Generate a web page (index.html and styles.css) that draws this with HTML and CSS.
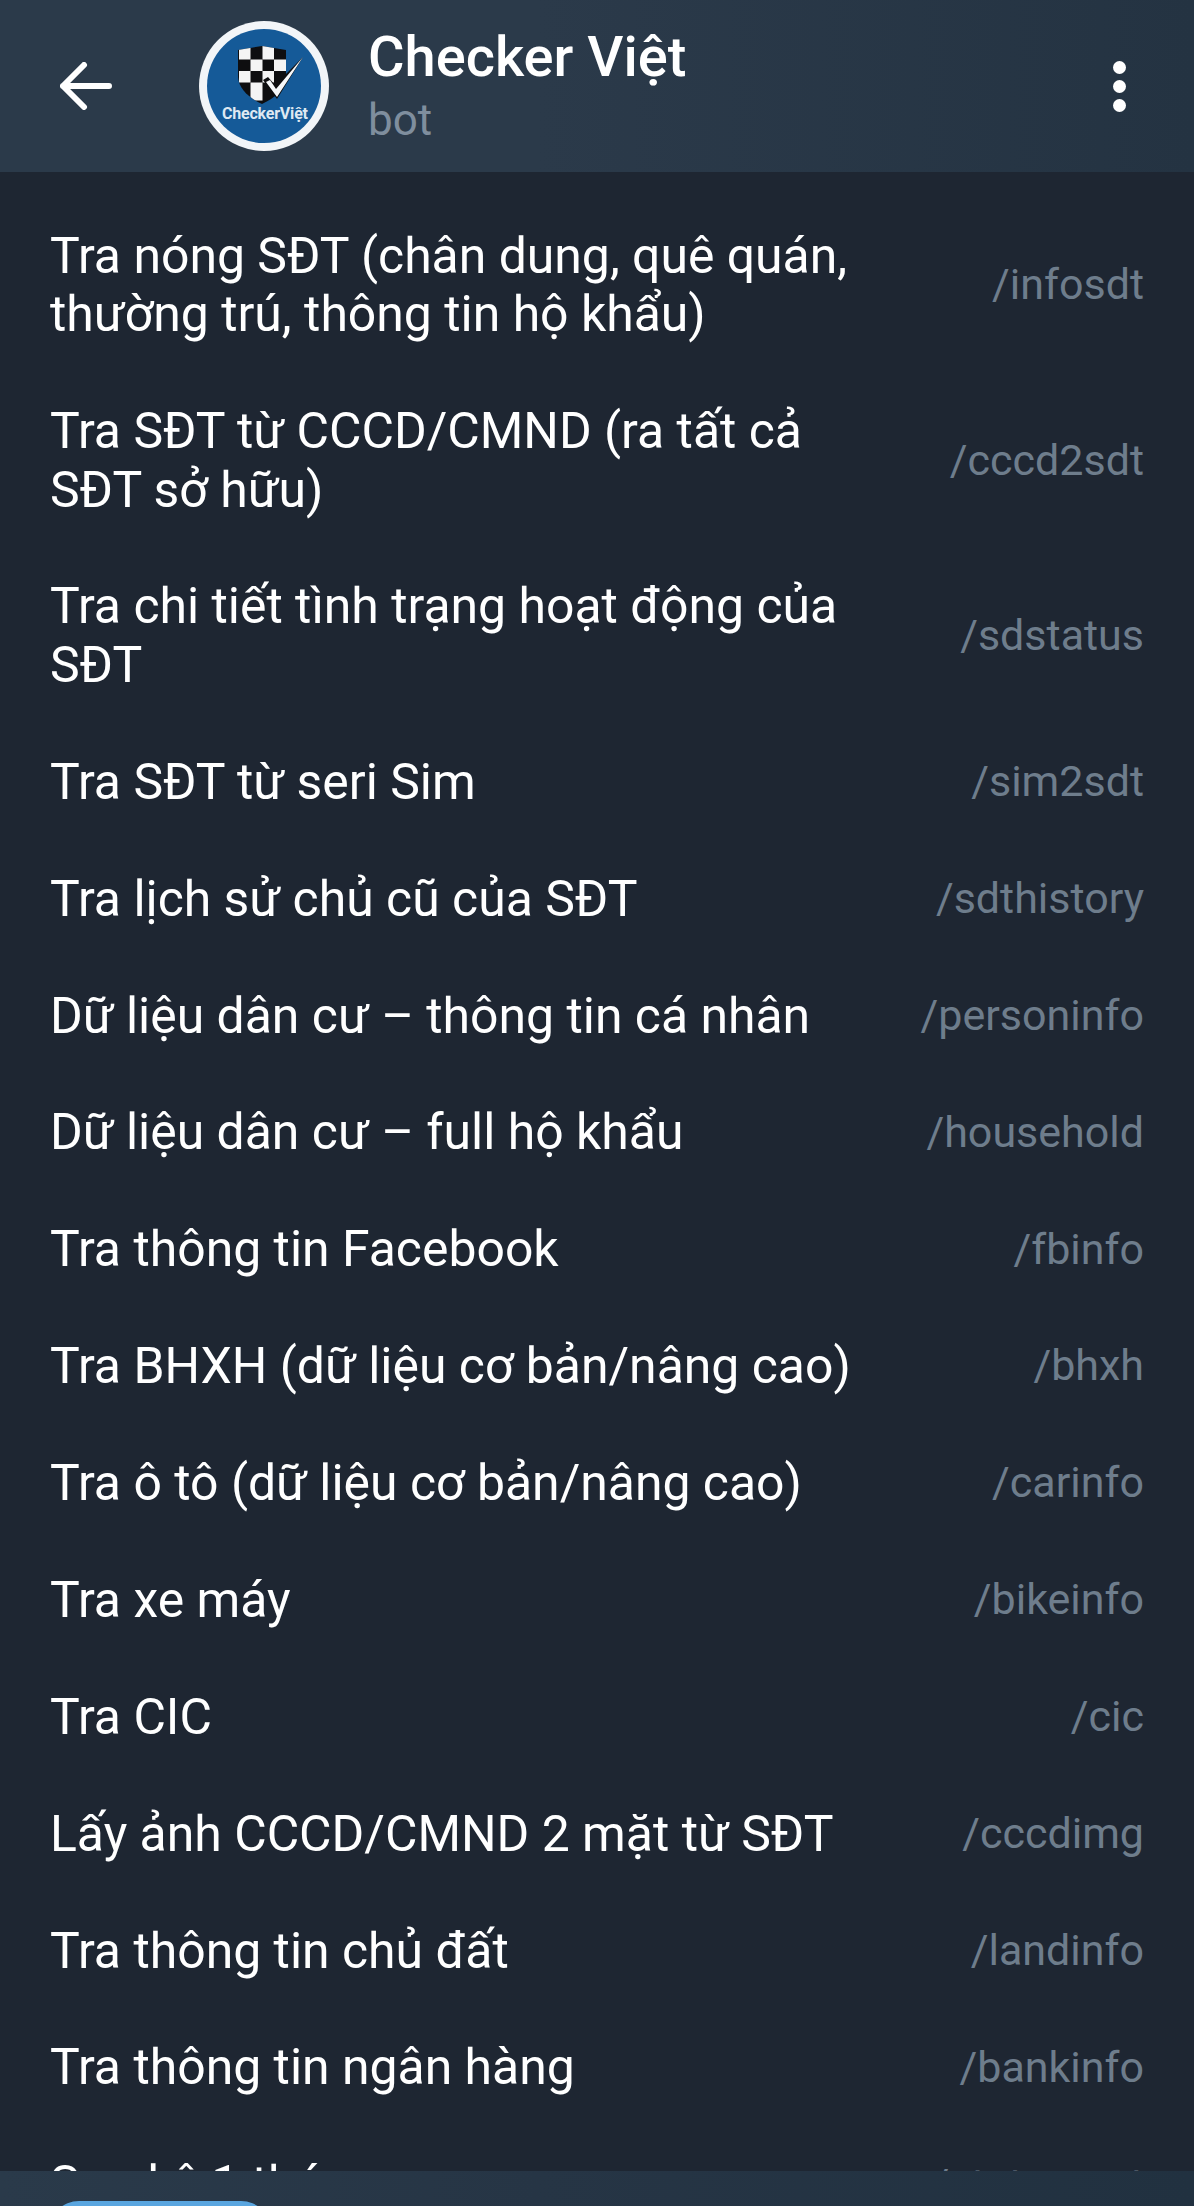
FILE: index.html
```html
<!DOCTYPE html>
<html lang="en">

<head>
    <meta charset="UTF-8">
    <meta name="viewport" content="width=device-width, initial-scale=1.0">
    <title>Checker Việt</title>
    <link rel="stylesheet" href="styles.css">
</head>

<body>
    <header class="topbar">
        <svg class="back-icon" viewBox="0 0 52 48" aria-hidden="true">
            <path d="M3 24H49M24 3L3 24L24 45" />
        </svg>
        <svg class="avatar" viewBox="0 0 130 130" aria-hidden="true">
            <defs>
                <clipPath id="shieldClip">
                    <path d="M39 29L63 25L87 29V56C86 68 76 77 63 83C50 77 40 68 39 56Z" />
                </clipPath>
            </defs>
            <circle cx="65" cy="65" r="65" fill="#f2f5f8" />
            <circle cx="65" cy="65" r="57" fill="#155a98" />
            <path d="M39 29L63 25L87 29V56C86 68 76 77 63 83C50 77 40 68 39 56Z" fill="#0e0e10" />
            <g fill="#f4f4f4" clip-path="url(#shieldClip)">
                <rect x="40" y="27" width="11.5" height="11.5" />
                <rect x="63.5" y="25" width="11.5" height="13.5" />
                <rect x="51.5" y="38.5" width="12" height="11.5" />
                <rect x="75" y="38.5" width="12" height="11.5" />
                <rect x="40" y="50" width="11.5" height="11.5" />
                <rect x="63.5" y="50" width="11.5" height="11.5" />
                <rect x="51.5" y="61.5" width="12" height="18" />
            </g>
            <path d="M64 59L69 56L76 64L104 36L78 78Z" fill="#0e0e10" />
            <path d="M67 61L71 59L77 68L104 36L78 76Z" fill="#f6f8fa" />
            <text class="avatar-name" x="66" y="98" text-anchor="middle" textLength="86">CheckerViệt</text>
        </svg>
        <div class="chat-info">
            <div class="chat-title">Checker Việt</div>
            <div class="chat-status">bot</div>
        </div>
        <div class="more-btn">
            <span class="dot"></span>
            <span class="dot"></span>
            <span class="dot"></span>
        </div>
    </header>

    <main class="commands">
        <div class="row"><div class="desc">Tra nóng SĐT (chân dung, quê quán, thường trú, thông tin hộ khẩu)</div><div class="cmd">/infosdt</div></div>
        <div class="row"><div class="desc">Tra SĐT từ CCCD/CMND (ra tất cả SĐT sở hữu)</div><div class="cmd">/cccd2sdt</div></div>
        <div class="row"><div class="desc">Tra chi tiết tình trạng hoạt động của SĐT</div><div class="cmd">/sdstatus</div></div>
        <div class="row"><div class="desc">Tra SĐT từ seri Sim</div><div class="cmd">/sim2sdt</div></div>
        <div class="row"><div class="desc">Tra lịch sử chủ cũ của SĐT</div><div class="cmd">/sdthistory</div></div>
        <div class="row"><div class="desc">Dữ liệu dân cư – thông tin cá nhân</div><div class="cmd">/personinfo</div></div>
        <div class="row"><div class="desc">Dữ liệu dân cư – full hộ khẩu</div><div class="cmd">/household</div></div>
        <div class="row"><div class="desc">Tra thông tin Facebook</div><div class="cmd">/fbinfo</div></div>
        <div class="row"><div class="desc">Tra BHXH (dữ liệu cơ bản/nâng cao)</div><div class="cmd">/bhxh</div></div>
        <div class="row"><div class="desc">Tra ô tô (dữ liệu cơ bản/nâng cao)</div><div class="cmd">/carinfo</div></div>
        <div class="row"><div class="desc">Tra xe máy</div><div class="cmd">/bikeinfo</div></div>
        <div class="row"><div class="desc">Tra CIC</div><div class="cmd">/cic</div></div>
        <div class="row"><div class="desc">Lấy ảnh CCCD/CMND 2 mặt từ SĐT</div><div class="cmd">/cccdimg</div></div>
        <div class="row"><div class="desc">Tra thông tin chủ đất</div><div class="cmd">/landinfo</div></div>
        <div class="row"><div class="desc">Tra thông tin ngân hàng</div><div class="cmd">/bankinfo</div></div>
        <div class="row"><div class="desc">Sao kê 1 tháng</div><div class="cmd">/statement</div></div>
    </main>

    <footer class="bottombar">
        <div class="menu-btn"></div>
    </footer>
</body>

</html>
```

FILE: styles.css
```css
html,
body {
    margin: 0;
    padding: 0;
    height: 100%;
}

body {
    width: 1194px;
    height: 2206px;
    display: flex;
    flex-direction: column;
    overflow: hidden;
    background-color: #1e2632;
    font-family: Roboto, "Noto Sans", sans-serif;
    color: #fff;
}

/* Top bar */
.topbar {
    flex: none;
    height: 172px;
    display: flex;
    align-items: center;
    padding: 0 60px;
    box-sizing: border-box;
    background: linear-gradient(90deg, #2b3a4a 0%, #2b3a4a 45%, #243342 100%);
}

.back-icon {
    flex: none;
    width: 52px;
    height: 48px;
    fill: none;
    stroke: #fff;
    stroke-width: 6;
    stroke-linecap: round;
    stroke-linejoin: round;
}

.avatar {
    flex: none;
    width: 130px;
    height: 130px;
    margin-left: 87px;
}

.avatar-name {
    font-family: Roboto, sans-serif;
    font-size: 16px;
    font-weight: 700;
    fill: #dfe9f2;
}

.chat-info {
    flex: 1;
    margin-left: 39px;
    margin-top: 2px;
}

.chat-title {
    font-size: 56px;
    font-weight: 500;
    line-height: 66px;
}

.chat-status {
    font-size: 44px;
    line-height: 60px;
    color: #7f8e9e;
}

.more-btn {
    flex: none;
    display: flex;
    flex-direction: column;
    gap: 6px;
    margin-right: 8px;
}

.dot {
    width: 13px;
    height: 13px;
    border-radius: 50%;
    background-color: #fff;
}

/* Command list */
.commands {
    flex: 1;
    min-height: 0;
    overflow: hidden;
    padding: 25.5px 50px 0;
}

.row {
    display: flex;
    align-items: center;
    justify-content: space-between;
    padding: 29.2px 0;
}

.desc {
    width: 820px;
    font-size: 49.9px;
    line-height: 58.5px;
}

.cmd {
    font-size: 43px;
    line-height: 54px;
    padding-bottom: 2px;
    color: #6e7d8c;
}

/* Bottom bar */
.bottombar {
    flex: none;
    height: 35px;
    overflow: hidden;
    padding: 30px 0 0 49px;
    box-sizing: border-box;
    background: linear-gradient(90deg, #2a3a4a 0%, #263545 45%, #213140 100%);
}

.menu-btn {
    width: 222px;
    height: 60px;
    border-radius: 30px;
    background-color: #5aa6e0;
}
```
